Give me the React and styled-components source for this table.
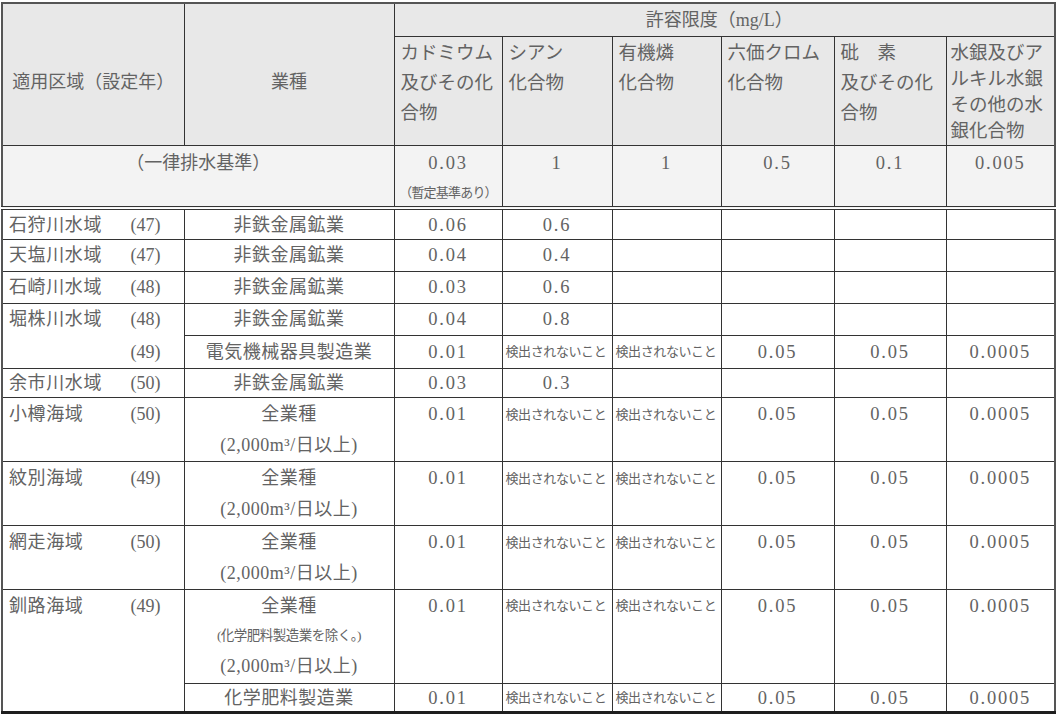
import React from 'react';
import styled, { createGlobalStyle } from 'styled-components';

const GlobalStyle = createGlobalStyle`
  body {
    margin: 0;
    background: #ffffff;
  }
`;

const Page = styled.div`
  padding: 2px 0 0 1px;
`;

const Table = styled.table`
  border-collapse: collapse;
  table-layout: fixed;
  width: 1053px;
  border-top: 2px solid #555;
  border-left: 2px solid #555;
  border-right: 2px solid #555;
  border-bottom: 3px solid #1e1e1e;
  font-family: "Liberation Serif", "Noto Sans CJK JP", serif;
  font-size: 18px;
  color: #636363;
`;

const Row = styled.tr`
  height: ${(p) => p.$h}px;
`;

const HeadCell = styled.th`
  border: 1px solid #333;
  background: ${(p) => (p.$light ? '#f3f3f3' : '#e8e8e8')};
  font-weight: 400;
  padding: ${(p) => p.$pad || '0'};
  text-align: center;
  vertical-align: ${(p) => p.$valign || 'middle'};
  line-height: 24px;
  border-bottom: ${(p) => (p.$double ? '4px double #333' : '1px solid #333')};
`;

const SubstanceCell = styled.th`
  border: 1px solid #333;
  background: #e8e8e8;
  font-weight: 400;
  font-size: 18.5px;
  text-align: left;
  vertical-align: top;
  padding: ${(p) => (p.$tight ? '3px 0 0 4px' : '1px 0 0 6px')};
  line-height: ${(p) => (p.$tight ? '26px' : '30px')};
  white-space: nowrap;
  overflow: hidden;
`;

const StandardCell = styled.td`
  border: 1px solid #333;
  border-bottom: 4px double #333;
  background: #f3f3f3;
  text-align: center;
  vertical-align: top;
  padding: 4px 0 0;
  line-height: 26px;
  font-size: 18.5px;
  letter-spacing: 1.8px;
`;

const Note = styled.div`
  font-size: 13px;
  letter-spacing: -0.8px;
  line-height: 20px;
  margin-top: 7px;
  white-space: nowrap;
`;

const Cell = styled.td`
  border: 1px solid #333;
  border-top: ${(p) => (p.$cont ? 'hidden' : '1px solid #333')};
  padding: ${(p) => p.$pt}px 0 0;
  vertical-align: top;
  line-height: ${(p) => p.$lh}px;
  text-align: ${(p) => p.$align || 'center'};
  font-size: ${(p) => (p.$small ? '13px' : p.$num ? '18.5px' : '18px')};
  letter-spacing: ${(p) => (p.$small ? '-0.4px' : p.$num ? '1.8px' : '0')};
  padding-left: ${(p) => (p.$small ? '3px' : '0')};
  white-space: nowrap;
  overflow: hidden;
`;

const Area = styled.div`
  display: flex;
  justify-content: space-between;
  padding: 0 23px 0 6px;
  letter-spacing: 0.6px;
`;

const Year = styled.span`
  letter-spacing: 0;
`;

const Line = styled.div`
  font-size: ${(p) => (p.$small ? '13.5px' : '18px')};
  letter-spacing: ${(p) => (p.$small ? '-0.5px' : '0.5px')};
`;

const ND = '検出されないこと';
const FULL = ['0.01', ND, ND, '0.05', '0.05', '0.0005'];
const VOLUME = '(2,000m³/日以上)';

const substances = [
  { lines: ['カドミウム', '及びその化', '合物'] },
  { lines: ['シアン', '化合物'] },
  { lines: ['有機燐', '化合物'] },
  { lines: ['六価クロム', '化合物'] },
  { lines: ['砒　素', '及びその化', '合物'] },
  { lines: ['水銀及びア', 'ルキル水銀', 'その他の水', '銀化合物'], tight: true },
];

const standard = ['0.03', '1', '1', '0.5', '0.1', '0.005'];

// h: row height, lh: line height, pt: top padding (heights tuned for the collapsed borders)
const rows = [
  { area: '石狩川水域', year: '(47)', ind: ['非鉄金属鉱業'], vals: ['0.06', '0.6'], h: 31, lh: 28, pt: 1 },
  { area: '天塩川水域', year: '(47)', ind: ['非鉄金属鉱業'], vals: ['0.04', '0.4'], h: 32, lh: 29, pt: 1 },
  { area: '石崎川水域', year: '(48)', ind: ['非鉄金属鉱業'], vals: ['0.03', '0.6'], h: 32, lh: 29, pt: 1 },
  { area: '堀株川水域', year: '(48)', ind: ['非鉄金属鉱業'], vals: ['0.04', '0.8'], h: 32, lh: 29, pt: 1 },
  { area: '', year: '(49)', cont: true, ind: ['電気機械器具製造業'], vals: FULL, h: 33, lh: 30, pt: 1 },
  { area: '余市川水域', year: '(50)', ind: ['非鉄金属鉱業'], vals: ['0.03', '0.3'], h: 29, lh: 26, pt: 1 },
  { area: '小樽海域', year: '(50)', ind: ['全業種', VOLUME], vals: FULL, h: 64, lh: 31, pt: 1 },
  { area: '紋別海域', year: '(49)', ind: ['全業種', VOLUME], vals: FULL, h: 63, lh: 31, pt: 1 },
  { area: '網走海域', year: '(50)', ind: ['全業種', VOLUME], vals: FULL, h: 64, lh: 31, pt: 1 },
  {
    area: '釧路海域',
    year: '(49)',
    ind: ['全業種', { small: '(化学肥料製造業を除く。)' }, VOLUME],
    vals: FULL,
    h: 94,
    lh: 30,
    pt: 1,
  },
  { area: '', year: '', cont: true, ind: ['化学肥料製造業'], vals: FULL, h: 29, lh: 26, pt: 1 },
];

const widths = [182, 210, 108, 110, 109, 113, 112, 109];

export default function App() {
  return (
    <Page>
      <GlobalStyle />
      <Table>
        <colgroup>
          {widths.map((w, i) => (
            <col key={i} style={{ width: w }} />
          ))}
        </colgroup>
        <thead>
          <Row $h={33}>
            <HeadCell rowSpan={2} $pad="16px 0 0">適用区域（設定年）</HeadCell>
            <HeadCell rowSpan={2} $pad="16px 0 0">業種</HeadCell>
            <HeadCell colSpan={6} $pad="0 10px 0 0">許容限度（mg/L）</HeadCell>
          </Row>
          <Row $h={109}>
            {substances.map((s, i) => (
              <SubstanceCell key={i} $tight={s.tight}>
                {s.lines.map((l) => (
                  <div key={l}>{l}</div>
                ))}
              </SubstanceCell>
            ))}
          </Row>
        </thead>
        <tbody>
          <Row $h={63}>
            <HeadCell colSpan={2} $light $double $valign="top" $pad="5px 0 0">
              （一律排水基準）
            </HeadCell>
            {standard.map((v, i) => (
              <StandardCell key={i}>
                {v}
                {i === 0 && <Note>（暫定基準あり）</Note>}
              </StandardCell>
            ))}
          </Row>
          {rows.map((r, ri) => (
            <Row key={ri} $h={r.h}>
              <Cell $cont={r.cont} $align="left" $lh={r.lh} $pt={r.pt}>
                <Area>
                  <span>{r.area}</span>
                  <Year>{r.year}</Year>
                </Area>
              </Cell>
              <Cell $lh={r.lh} $pt={r.pt}>
                {r.ind.map((l, li) =>
                  typeof l === 'string' ? (
                    <Line key={li}>{l}</Line>
                  ) : (
                    <Line key={li} $small>
                      {l.small}
                    </Line>
                  )
                )}
              </Cell>
              {Array.from({ length: 6 }).map((_, ci) => {
                const v = r.vals[ci] || '';
                const small = v === ND;
                return (
                  <Cell
                    key={ci}
                    $lh={r.lh}
                    $pt={r.pt}
                    $small={small}
                    $num={!small}
                    $align={small ? 'left' : 'center'}
                  >
                    {v}
                  </Cell>
                );
              })}
            </Row>
          ))}
        </tbody>
      </Table>
    </Page>
  );
}
